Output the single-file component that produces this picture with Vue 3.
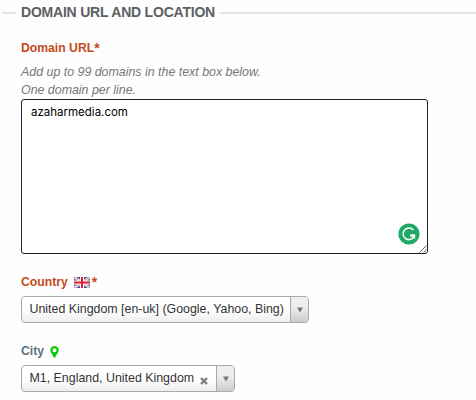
<template>
  <div class="form-box">
    <div class="legend"><span class="legend-text">DOMAIN URL AND LOCATION</span></div>

    <div class="fields">
      <label class="label required url-label" for="domains"><span class="url-text">Domain URL</span><span class="star">*</span></label>
      <p class="hint">Add up to 99 domains in the text box below.<br>One domain per line.</p>
      <div class="area">
        <textarea id="domains" v-model="domains" spellcheck="false"></textarea>
        <svg class="checker" viewBox="0 0 22 22">
          <circle cx="11" cy="11" r="10.6" fill="#1fa967" />
          <path d="M15.4 7.1A5.8 5.8 0 1 0 16.3 13H12" fill="none" stroke="#fff" stroke-width="1.5" />
          <path d="M12 11.2h5.1v5.1z" fill="#fff" />
        </svg>
        <svg class="grip" viewBox="0 0 8 8">
          <path d="M.5 7.5l7-7M4.5 7.5l3-3" stroke="#666" stroke-width="1" />
        </svg>
      </div>

      <div class="label required country-label">
        <span class="country-text">Country</span>
        <svg class="flag" viewBox="0 0 16 11">
          <rect width="16" height="11" fill="#39539b" />
          <path d="M0 0l16 11M16 0L0 11" stroke="#fff" stroke-width="2.4" />
          <path d="M0 0l16 11M16 0L0 11" stroke="#d94a5b" stroke-width=".8" />
          <path d="M8 0v11M0 5.5h16" stroke="#fff" stroke-width="4" />
          <path d="M8 0v11M0 5.5h16" stroke="#d51f35" stroke-width="2" />
        </svg>
        <span class="star">*</span>
      </div>
      <div class="select country">
        <span class="chosen">{{ country }}</span>
        <span class="arrow"><svg viewBox="0 0 6 6"><path d="M0 .4h6L3 5.6z" fill="#777" /></svg></span>
      </div>

      <div class="label city-label">
        <span class="city-text">City</span>
        <svg class="pin" viewBox="0 0 9 12">
          <path fill-rule="evenodd" d="M4.5 0A4.2 4.2 0 0 0 .3 4.2C.3 6.5 2.7 8.4 3.7 11.3q.8 1.3 1.6 0C6.3 8.4 8.7 6.5 8.7 4.2A4.2 4.2 0 0 0 4.5 0zm0 2.2a2 2 0 1 1 0 4 2 2 0 0 1 0-4z" fill="#09cb0d" />
        </svg>
      </div>
      <div class="select city">
        <span class="chosen">{{ city }}</span>
        <svg class="clear" viewBox="0 0 8 8"><path d="M1 1l6 6M7 1L1 7" stroke="#777" stroke-width="2" /></svg>
        <span class="arrow"><svg viewBox="0 0 6 6"><path d="M0 .4h6L3 5.6z" fill="#777" /></svg></span>
      </div>
    </div>
  </div>
</template>

<script setup>
import { ref } from 'vue';

const domains = ref('azaharmedia.com');
const country = ref('United Kingdom [en-uk] (Google, Yahoo, Bing)');
const city = ref('M1, England, United Kingdom');
</script>

<style>
body {
  background: #fefefe;
}
</style>

<style scoped>
.form-box {
  height: 400px;
  overflow: hidden;
  font-family: "Liberation Sans", Arial, sans-serif;
  font-size: 12px;
  color: #333;
}

.legend {
  display: flex;
  align-items: center;
  height: 26px;
  padding-left: 2px;
}
.legend::before,
.legend::after {
  content: "";
  height: 2px;
  background: #e3e3e3;
}
.legend::before {
  width: 14px;
}
.legend::after {
  flex: 1;
}
.legend-text {
  width: 194px;
  margin: 0 5px;
  font-size: 14px;
  font-weight: bold;
  line-height: 24px;
  padding-bottom: 2px;
  letter-spacing: -0.21px;
  white-space: nowrap;
  color: #5c6063;
}

.fields {
  padding-left: 21px;
}
.label {
  display: flex;
  align-items: center;
  height: 16px;
  font-size: 12.2px;
  font-weight: bold;
  color: #596f80;
}
.required {
  color: #c44a1c;
}
.url-label {
  margin-top: 14px;
}
.star {
  font-size: 14px;
  line-height: 16px;
}

.hint {
  margin: 7px 0 0;
  font-size: 12.4px;
  font-style: italic;
  line-height: 18px;
  color: #777;
}

.area {
  position: relative;
  width: 407px;
  height: 155px;
}
textarea {
  display: block;
  box-sizing: border-box;
  width: 100%;
  height: 100%;
  padding: 4px 9px;
  border: 1px solid #222;
  border-radius: 3px;
  outline: none;
  resize: none;
  background: #fff;
  font-family: Inter, sans-serif;
  font-size: 11.5px;
  line-height: 16px;
  color: #000;
}
.checker {
  position: absolute;
  right: 8px;
  bottom: 9px;
  width: 22px;
  height: 22px;
}
.grip {
  position: absolute;
  right: 1px;
  bottom: 1px;
  width: 8px;
  height: 8px;
}

.country-label {
  margin-top: 20px;
}
.flag {
  width: 16px;
  height: 11px;
  margin: 1px 2px 0 6px;
}
.select {
  display: flex;
  align-items: center;
  box-sizing: border-box;
  height: 27px;
  padding-left: 7.5px;
  border: 1px solid #aaa;
  border-radius: 4px;
  overflow: hidden;
  background: linear-gradient(to top, #eee 0%, #fff 50%);
}
.country {
  width: 288px;
  margin-top: 6px;
}
.city {
  width: 214px;
  margin-top: 6px;
}
.chosen {
  flex: 1;
  padding-bottom: 1px;
  font-size: 12.4px;
  white-space: nowrap;
  color: #333;
}
.arrow {
  display: flex;
  align-items: center;
  justify-content: center;
  width: 17px;
  height: 100%;
  border-left: 1px solid #aaa;
  background: linear-gradient(to top, #ccc 0%, #eee 60%);
}
.arrow svg {
  width: 6px;
  height: 6px;
  margin-top: 1px;
}
.clear {
  width: 8px;
  height: 8px;
  margin: 4px 8px 0 0;
}
.city-label {
  margin-top: 20px;
}
.pin {
  width: 9px;
  height: 12px;
  margin: 1px 0 0 6px;
}
</style>
